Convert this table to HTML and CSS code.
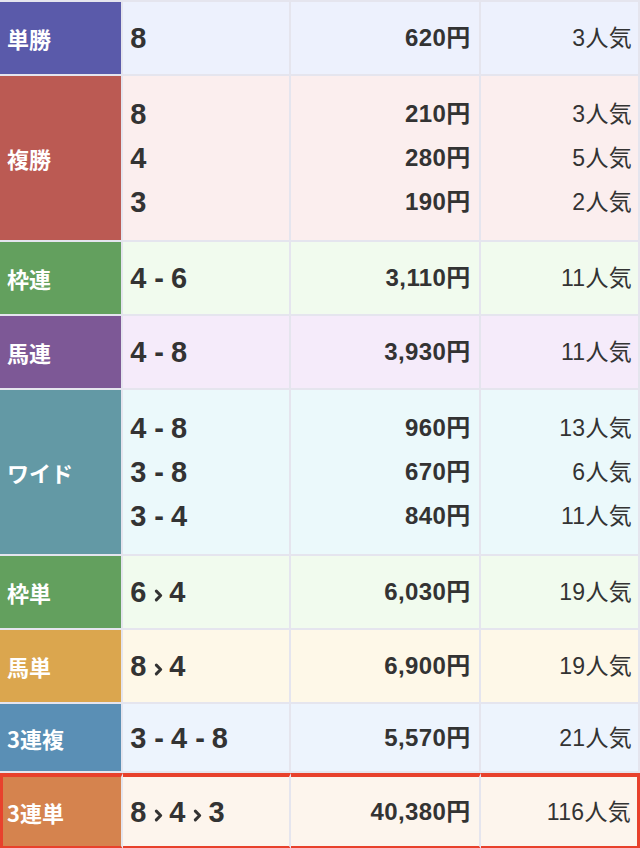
FILE: index.html
```html
<!DOCTYPE html>
<html lang="ja">
<head>
<meta charset="utf-8">
<title>払戻金</title>
<link rel="stylesheet" href="styles.css">
</head>
<body>
<table class="payout">
  <tr class="r-tan">
    <th>単勝</th>
    <td class="num">8</td>
    <td class="yen">620円</td>
    <td class="pop">3人気</td>
  </tr>
  <tr class="r-fuku multi">
    <th>複勝</th>
    <td class="num">8<br>4<br>3</td>
    <td class="yen">210円<br>280円<br>190円</td>
    <td class="pop">3人気<br>5人気<br>2人気</td>
  </tr>
  <tr class="r-wakuren">
    <th>枠連</th>
    <td class="num">4<span class="dash">-</span>6</td>
    <td class="yen">3,110円</td>
    <td class="pop">11人気</td>
  </tr>
  <tr class="r-umaren">
    <th>馬連</th>
    <td class="num">4<span class="dash">-</span>8</td>
    <td class="yen">3,930円</td>
    <td class="pop">11人気</td>
  </tr>
  <tr class="r-wide multi">
    <th>ワイド</th>
    <td class="num">4<span class="dash">-</span>8<br>3<span class="dash">-</span>8<br>3<span class="dash">-</span>4</td>
    <td class="yen">960円<br>670円<br>840円</td>
    <td class="pop">13人気<br>6人気<br>11人気</td>
  </tr>
  <tr class="r-wakutan">
    <th>枠単</th>
    <td class="num">6<svg class="arr" viewBox="0 0 8 12" width="8" height="12"><polyline points="2,2 6,6 2,10" fill="none" stroke="#333" stroke-width="2.8" stroke-linecap="round" stroke-linejoin="round"/></svg>4</td>
    <td class="yen">6,030円</td>
    <td class="pop">19人気</td>
  </tr>
  <tr class="r-umatan">
    <th>馬単</th>
    <td class="num">8<svg class="arr" viewBox="0 0 8 12" width="8" height="12"><polyline points="2,2 6,6 2,10" fill="none" stroke="#333" stroke-width="2.8" stroke-linecap="round" stroke-linejoin="round"/></svg>4</td>
    <td class="yen">6,900円</td>
    <td class="pop">19人気</td>
  </tr>
  <tr class="r-trio">
    <th>3連複</th>
    <td class="num">3<span class="dash">-</span>4<span class="dash">-</span>8</td>
    <td class="yen">5,570円</td>
    <td class="pop">21人気</td>
  </tr>
  <tr class="r-trifecta hl">
    <th>3連単</th>
    <td class="num">8<svg class="arr" viewBox="0 0 8 12" width="8" height="12"><polyline points="2,2 6,6 2,10" fill="none" stroke="#333" stroke-width="2.8" stroke-linecap="round" stroke-linejoin="round"/></svg>4<svg class="arr" viewBox="0 0 8 12" width="8" height="12"><polyline points="2,2 6,6 2,10" fill="none" stroke="#333" stroke-width="2.8" stroke-linecap="round" stroke-linejoin="round"/></svg>3</td>
    <td class="yen">40,380円</td>
    <td class="pop">116人気</td>
  </tr>
</table>
</body>
</html>
```

FILE: styles.css
```css
html, body {
  margin: 0;
  padding: 0;
  background: #ffffff;
}
body {
  font-family: "Liberation Sans", "Noto Sans CJK JP", sans-serif;
  color: #333333;
  width: 640px;
  overflow: hidden;
}
.payout {
  width: 640px;
  border-collapse: separate;
  border-spacing: 0;
  table-layout: fixed;
  border-top: 2px solid #e5e5ee;
}
.payout th,
.payout td {
  height: 72px;
  border-right: 2px solid #e5e5ee;
  border-bottom: 2px solid #e5e5ee;
  vertical-align: middle;
  padding: 0;
  line-height: 44px;
}
.payout .multi th,
.payout .multi td {
  height: 164px;
}
.payout .r-trio th,
.payout .r-trio td {
  height: 67px;
}
.payout th {
  width: 114px;
  padding-left: 7px;
  text-align: left;
  color: #ffffff;
  font-family: "Noto Sans CJK JP", sans-serif;
  font-size: 22px;
  font-weight: 700;
}
.payout td.num {
  width: 159px;
  padding-left: 7px;
  font-size: 29px;
  font-weight: 700;
}
.payout td.yen {
  width: 179px;
  padding-right: 8px;
  text-align: right;
  font-size: 24px;
  font-weight: 700;
  letter-spacing: 0.4px;
}
.payout td.pop {
  width: 151px;
  padding-right: 6px;
  text-align: right;
  font-size: 23px;
  font-weight: 400;
  letter-spacing: 0.3px;
}
.dash {
  display: inline-block;
  margin: 0 7px 0 8px;
  font-weight: 700;
}
.arr {
  display: inline-block;
  width: 9px;
  height: 13px;
  margin: 0 6px 0 8px;
  vertical-align: 0;
}

.r-tan th { background: #5a5aaa; }
.r-tan td { background: #edf1fd; }
.r-fuku th { background: #bb5a53; }
.r-fuku td { background: #fbeeee; }
.r-wakuren th { background: #63a05e; }
.r-wakuren td { background: #f1fbee; }
.r-umaren th { background: #7d5896; }
.r-umaren td { background: #f5ebfa; }
.r-wide th { background: #6399a5; }
.r-wide td { background: #ebf9fb; }
.r-wakutan th { background: #63a05e; }
.r-wakutan td { background: #f1fbee; }
.r-umatan th { background: #dba64e; }
.r-umatan td { background: #fef8e8; }
.r-trio th { background: #5a8fb5; }
.r-trio td { background: #edf4fd; }
.r-trifecta th { background: #d5834e; }
.r-trifecta td { background: #fdf5ed; }

.payout .hl th,
.payout .hl td {
  height: 69px;
  border-top: 4px solid #e8412c;
  border-bottom: 3px solid #e8412c;
}
.payout .hl th {
  border-left: 3px solid #e8412c;
  padding-left: 4px;
}
.payout .hl td.pop {
  border-right: 3px solid #e8412c;
}
```
